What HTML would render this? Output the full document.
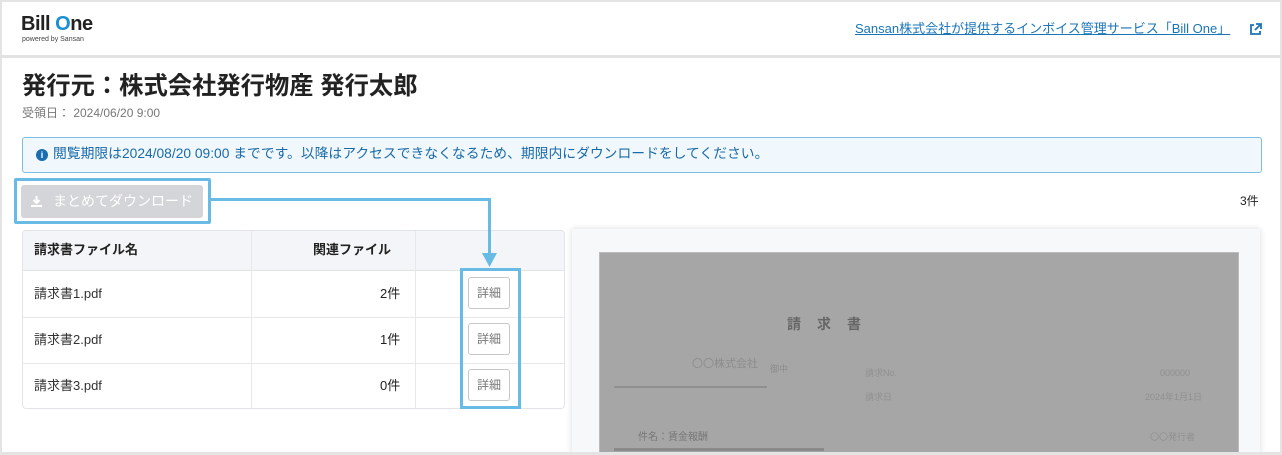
<!DOCTYPE html><html><head><meta charset="utf-8"><style>
*{margin:0;padding:0;box-sizing:border-box}
body{width:1282px;height:455px;overflow:hidden;background:#fff;font-family:"Liberation Sans","Noto Sans CJK JP",sans-serif;color:#222;position:relative;line-height:1.2}
.a{position:absolute}
</style></head><body>
<div class="a" style="left:0;top:0;width:1282px;height:455px;border:2px solid #e4e4e4;border-bottom:none"></div>
<div class="a" style="left:0;top:55px;width:1282px;height:3px;background:#e2e2e2"></div>
<div class="a" style="left:21px;top:12px;font-size:20px;font-weight:bold;letter-spacing:-0.5px;color:#222">Bill <span style="color:#1b8fd0">O</span>ne</div>
<div class="a" style="left:22px;top:36px;font-size:7px;color:#444">powered by Sansan</div>
<div class="a" style="left:855px;top:21px;font-size:13px;color:#1a75b8;text-decoration:underline">Sansan株式会社が提供するインボイス管理サービス「Bill One」</div>
<svg class="a" style="left:1249px;top:23px" width="13" height="13" viewBox="0 0 13 13"><path d="M5 2H2v9h9V8" fill="none" stroke="#1a75b8" stroke-width="1.8"/><path d="M7 1h5v5M12 1L6 7" fill="none" stroke="#1a75b8" stroke-width="1.8"/></svg>
<div class="a" style="left:22px;top:72px;font-size:24.3px;font-weight:bold;color:#222">発行元：株式会社発行物産 発行太郎</div>
<div class="a" style="left:22px;top:106px;font-size:12px;color:#777">受領日： 2024/06/20 9:00</div>
<div class="a" style="left:22px;top:137px;width:1240px;height:36px;border:1px solid #7cbde0;border-radius:3px;background:#f1f8fd"></div>
<div class="a" style="left:36px;top:149px;width:12px;height:12px;border-radius:50%;background:#1a6eb0;color:#fff;font-size:9px;font-weight:bold;text-align:center;line-height:12px">i</div>
<div class="a" style="left:53px;top:146px;font-size:13.8px;color:#1a6aa8">閲覧期限は2024/08/20 09:00 までです。以降はアクセスできなくなるため、期限内にダウンロードをしてください。</div>
<div class="a" style="left:14px;top:178px;width:197px;height:46px;border:3px solid #68bbe5;border-radius:2px"></div>
<div class="a" style="left:21px;top:185px;width:182px;height:33px;background:#d4d5d8;border-radius:3px"></div>
<svg class="a" style="left:30px;top:195px" width="13" height="13" viewBox="0 0 13 13"><path d="M6.5 1v7M3.5 5l3 3 3-3M1 11h11" fill="none" stroke="#fff" stroke-width="2"/></svg>
<div class="a" style="left:53px;top:193px;font-size:14px;color:#fff">まとめてダウンロード</div>
<div class="a" style="left:1240px;top:194px;font-size:12px">3件</div>
<div class="a" style="left:22px;top:230px;width:543px;height:179px;border:1px solid #e2e4e8;border-radius:4px;overflow:hidden;font-size:13px;line-height:16px">
<div class="a" style="left:0;top:0;width:543px;height:40px;background:#f4f5f8;border-bottom:1px solid #e2e4e8"></div>
<div class="a" style="left:0;top:86px;width:543px;height:1px;background:#e8e8e8"></div>
<div class="a" style="left:0;top:132px;width:543px;height:1px;background:#e8e8e8"></div>
<div class="a" style="left:228px;top:0;width:1px;height:179px;background:#e8e8e8"></div>
<div class="a" style="left:392px;top:0;width:1px;height:179px;background:#e8e8e8"></div>
<div class="a" style="left:11px;top:11px;font-weight:bold">請求書ファイル名</div>
<div class="a" style="left:290px;top:11px;font-weight:bold">関連ファイル</div>
<div class="a" style="left:11px;top:55px;color:#333">請求書1.pdf</div><div class="a" style="left:357px;top:55px">2件</div>
<div class="a" style="left:11px;top:101px;color:#333">請求書2.pdf</div><div class="a" style="left:357px;top:101px">1件</div>
<div class="a" style="left:11px;top:147px;color:#333">請求書3.pdf</div><div class="a" style="left:357px;top:147px">0件</div>
</div>
<div class="a" style="left:211px;top:198px;width:280px;height:3px;background:#68bbe5"></div>
<div class="a" style="left:488px;top:198px;width:3px;height:58px;background:#68bbe5"></div>
<svg class="a" style="left:482px;top:253px" width="15" height="14"><path d="M0 0h15L7.5 14z" fill="#68bbe5"/></svg>
<div class="a" style="left:460px;top:268px;width:61px;height:141px;border:3px solid #68bbe5"></div>
<div class="a" style="left:468px;top:277px;width:42px;height:32px;border:1px solid #c8c8c8;border-radius:3px;font-size:12px;color:#777;text-align:center;line-height:30px;background:#fff">詳細</div>
<div class="a" style="left:468px;top:323px;width:42px;height:32px;border:1px solid #c8c8c8;border-radius:3px;font-size:12px;color:#777;text-align:center;line-height:30px;background:#fff">詳細</div>
<div class="a" style="left:468px;top:369px;width:42px;height:32px;border:1px solid #c8c8c8;border-radius:3px;font-size:12px;color:#777;text-align:center;line-height:30px;background:#fff">詳細</div>
<div class="a" style="left:572px;top:229px;width:688px;height:226px;background:#f7f8fa;box-shadow:0 0 6px rgba(0,0,0,0.15)"></div>
<div class="a" style="left:599px;top:252px;width:640px;height:203px;background:#a6a6a6;border:1px solid #bbb"></div>
<div class="a" style="left:787px;top:316px;font-size:14px;color:#666;letter-spacing:16px;font-weight:bold">請求書</div>
<div class="a" style="left:692px;top:358px;font-size:11px;color:#8c8c8c">〇〇株式会社</div>
<div class="a" style="left:770px;top:364px;font-size:9px;color:#8c8c8c">御中</div>
<div class="a" style="left:614px;top:386px;width:153px;height:2px;background:#909090"></div>
<div class="a" style="left:865px;top:368px;font-size:9px;color:#909090">請求No.</div>
<div class="a" style="left:1160px;top:368px;font-size:9px;color:#909090">000000</div>
<div class="a" style="left:865px;top:392px;font-size:9px;color:#909090">請求日</div>
<div class="a" style="left:1145px;top:392px;font-size:9px;color:#909090">2024年1月1日</div>
<div class="a" style="left:638px;top:432px;font-size:10px;color:#777">件名：賃金報酬</div>
<div class="a" style="left:1150px;top:432px;font-size:9px;color:#909090">〇〇発行者</div>
<div class="a" style="left:614px;top:448px;width:210px;height:3px;background:#8a8a8a"></div>
<div class="a" style="left:0;top:452px;width:1282px;height:3px;background:#e4e4e4"></div>
</body></html>
